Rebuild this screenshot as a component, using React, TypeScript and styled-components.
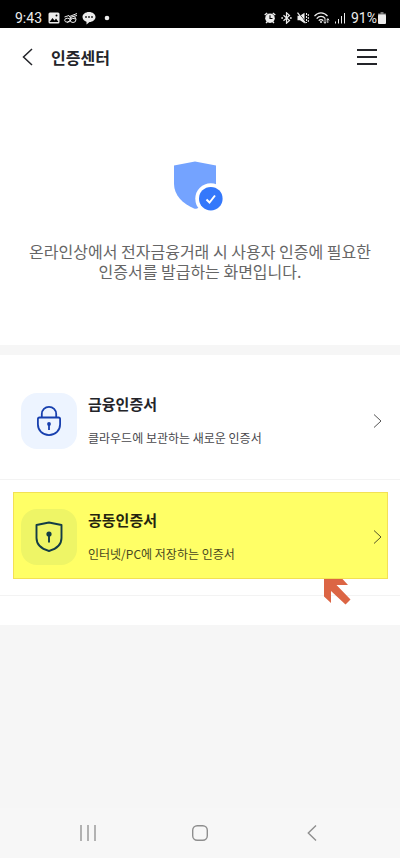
import React from "react";
import styled, { createGlobalStyle } from "styled-components";

const GlobalStyle = createGlobalStyle`
  *, *::before, *::after { box-sizing: border-box; }
  body {
    margin: 0;
    background: #f6f6f6;
    color: #232429;
    font-family: "Noto Sans CJK KR", "Noto Sans", sans-serif;
  }
  button { border: 0; padding: 0; background: none; color: inherit; font: inherit; cursor: pointer; }
  h1, h2, p, ul { margin: 0; padding: 0; }
  svg { display: block; flex: none; }
`;

const Screen = styled.div`
  min-height: 100vh;
  display: flex;
  flex-direction: column;
`;

const StatusBar = styled.div`
  height: 28px;
  padding: 8px 14px 0 15px;
  display: flex;
  align-items: center;
  justify-content: space-between;
  background: #000;
  color: #ececec;
  font-family: Roboto, sans-serif;
  font-size: 14px;
  line-height: 20px;
`;

const StatusGroup = styled.div<{ $gap: number }>`
  display: flex;
  align-items: center;
  gap: ${(p) => p.$gap}px;
`;

const Battery = styled.span`
  display: flex;
  align-items: center;
  gap: 1px;
`;

const Header = styled.header`
  height: 58px;
  padding: 0 22px;
  display: flex;
  align-items: center;
  background: #fff;
`;

const HeaderTitle = styled.h1`
  flex: 1;
  padding-left: 17px;
  font-size: 16px;
  line-height: 24px;
  font-weight: 700;
`;

const Hero = styled.section`
  min-height: 259px;
  padding: 75px 20px 0;
  display: flex;
  flex-direction: column;
  align-items: center;
  gap: 30px;
  background: #fff;
`;

const HeroText = styled.p`
  color: #666;
  font-size: 16px;
  line-height: 20px;
  text-align: center;
`;

const List = styled.ul`
  margin-top: 10px;
  padding-bottom: 29px;
  list-style: none;
  background: #fff;
`;

const ListItem = styled.li<{ $top: number; $bottom: number }>`
  padding: ${(p) => p.$top}px 12px ${(p) => p.$bottom}px 13px;
  border-bottom: 1px solid #f3f3f3;
`;

const CardWrap = styled.div`
  position: relative;
`;

const Card = styled.button<{ $highlighted?: boolean }>`
  width: 100%;
  min-height: 87px;
  padding: 3px 5px 0 7px;
  display: flex;
  align-items: center;
  gap: 11px;
  text-align: left;
  border: 1px solid ${(p) => (p.$highlighted ? "#f3e154" : "transparent")};
  background: ${(p) => (p.$highlighted ? "#ffff66" : "transparent")};
  color: ${(p) => (p.$highlighted ? "#24240f" : "#232429")};
`;

const IconTile = styled.span<{ $highlighted?: boolean }>`
  width: 56px;
  height: 56px;
  flex: none;
  display: flex;
  align-items: center;
  justify-content: center;
  border-radius: 16px;
  background: ${(p) => (p.$highlighted ? "#eef566" : "#edf4ff")};
`;

const CardText = styled.span`
  flex: 1;
  display: flex;
  flex-direction: column;
  gap: 12px;
`;

const CardTitle = styled.span`
  font-size: 15px;
  line-height: 22px;
  font-weight: 700;
`;

const CardNote = styled.span<{ $highlighted?: boolean }>`
  font-size: 12px;
  line-height: 22px;
  color: ${(p) => (p.$highlighted ? "#48481f" : "#48484c")};
`;

const Pointer = styled.svg`
  position: absolute;
  top: 100%;
  right: 37px;
  pointer-events: none;
`;

const NavBar = styled.nav`
  height: 50px;
  margin-top: auto;
  padding: 0 32px;
  display: grid;
  grid-template-columns: repeat(3, 1fr);
  background: #f7f7f7;
`;

const NavButton = styled.button`
  display: flex;
  align-items: center;
  justify-content: center;
`;

const ShieldCheck = () => (
  <svg width="52" height="50" viewBox="0 0 52 50" aria-hidden="true">
    <path d="M0 4.500 21 .5l21 4V24c0 12-10 20-19 23.500-1 .3-2 .3-3 0C9 43 0 34 0 23Z" fill="#74a3ff" />
    <circle cx="36.800" cy="37.700" r="15.500" fill="#fff" />
    <circle cx="36.800" cy="37.700" r="11.800" fill="#3478fb" />
    <path d="m32.500 38.500 3 3 5.500-7" fill="none" stroke="#fff" strokeWidth="2" />
  </svg>
);

const LockIcon = () => (
  <svg width="26" height="32" viewBox="0 0 26 32" fill="none" stroke="#173fae" strokeWidth="1.800" aria-hidden="true">
    <path d="M5.800 12.500V9a7.200 7.200 0 0 1 14.400 0v3.500" />
    <path d="M3.500 12.500h19c1 0 1.600.6 1.600 1.600v5.200c0 6-4.500 10.800-11.100 10.800S1.900 25.300 1.900 19.300v-5.200c0-1 .6-1.600 1.600-1.600Z" />
    <circle cx="13" cy="19" r="1.900" fill="#173fae" stroke="none" />
    <path d="M13 19v6" />
  </svg>
);

const ShieldKeyIcon = () => (
  <svg width="28" height="32" viewBox="0 0 28 32" fill="none" stroke="#123c46" strokeWidth="1.900" aria-hidden="true">
    <path d="M14 1.500 26.500 4V17c0 6.500-5.500 11-12.500 13C7 28 1.500 23.500 1.500 17V4Z" strokeLinejoin="round" />
    <circle cx="14" cy="13" r="2.600" fill="#123c46" stroke="none" />
    <path d="M14 13V21.500" />
  </svg>
);

const Chevron = ({ color }: { color: string }) => (
  <svg width="10" height="16" viewBox="0 0 10 16" fill="none" stroke={color} aria-hidden="true">
    <path d="m2 1.500 7 6.500-7 6.500" />
  </svg>
);

const PictureIcon = () => (
  <svg width="12" height="12" viewBox="0 0 12 12">
    <rect x=".5" y=".5" width="11" height="11" rx="1.500" fill="#ececec" />
    <path d="m1.500 10 3-4 2 2.400L8 6.500l2.500 3.500Z" fill="#000" />
    <circle cx="8.500" cy="3.500" r="1" fill="#000" />
  </svg>
);

const DoodleIcon = () => (
  <svg width="14" height="12" viewBox="0 0 14 12" fill="none" stroke="#ececec">
    <ellipse cx="3.500" cy="8.200" rx="2.800" ry="2" />
    <ellipse cx="9" cy="7.500" rx="3" ry="3" />
    <path d="M.5 5 5 3.500l2.500 4-4.500 3M5.500 4.500l7.500-3M7 6l5 1M9 4.500l4-1" />
  </svg>
);

const ChatIcon = () => (
  <svg width="14" height="14" viewBox="0 0 14 14">
    <path d="M7 1c3.600 0 6.500 2.200 6.500 5S10.600 11 7.500 11L4.500 13.500V10.700C2.200 10 .5 8.200.5 6 .5 3.200 3.400 1 7 1Z" fill="#ececec" />
    <path d="M3.200 5.300h1.600v1.500H3.200zM6.200 5.300h1.600v1.500H6.200zM9.200 5.300h1.600v1.500H9.200z" fill="#000" />
  </svg>
);

const AlarmIcon = () => (
  <svg width="12" height="12" viewBox="0 0 12 12">
    <path d="m.7 3 2.500-2M11.300 3 8.800 1M2 11l1.500-1.500M10 11 8.500 9.500" stroke="#ececec" strokeWidth="1.400" />
    <circle cx="6" cy="6.200" r="4.800" fill="#ececec" />
    <path d="M6 3.300v3.200h2.500" fill="none" stroke="#000" strokeWidth="1.100" />
  </svg>
);

const BluetoothIcon = () => (
  <svg width="11" height="12" viewBox="0 0 11 12" fill="none" stroke="#ececec" strokeWidth="1.200">
    <path d="m2.500 3.200 6 5.300-3 2.700V.8l3 2.700-6 5.300" />
    <path d="M.3 6h1.700M9 6h1.700" strokeWidth="1.500" />
  </svg>
);

const MuteIcon = () => (
  <svg width="12" height="12" viewBox="0 0 12 12" fill="none" stroke="#ececec">
    <path d="M.5 3.800H3L7.500.8v10.400L3 8.200H.5Z" fill="#ececec" stroke="none" />
    <path d="m1.300.5 7.700 10" stroke="#000" />
    <path d="m.5.700 8 10.500" strokeWidth="1.200" />
    <path d="M9.500 1v10M11.300 2v9" strokeDasharray="2 1" />
  </svg>
);

const WifiIcon = () => (
  <svg width="16" height="12" viewBox="0 0 16 12" fill="none" stroke="#ececec" strokeWidth="1.300">
    <path d="M.5 4.200C4-.2 10-.2 13.500 4.200M2.700 6.600c2.400-3 6.200-3 8.600 0M4.800 8.700c1.300-1.500 3.100-1.500 4.400 0" />
    <circle cx="7" cy="10" r="1" fill="#ececec" stroke="none" />
    <path d="M11 6.800v4.500M9.600 9.700 11 11.300l1.300-1.600M13.800 11V6.700M12.500 8.300l1.300-1.600 1.400 1.600" strokeWidth=".9" />
  </svg>
);

const SignalIcon = () => (
  <svg width="11" height="12" viewBox="0 0 11 12" stroke="#ececec">
    <path d="M.5 9.500v2M3.500 7v4.500M6.500 4v7.500M9.500 1v10.500" />
  </svg>
);

const BatteryIcon = () => (
  <svg width="8" height="12" viewBox="0 0 8 12" fill="#ececec">
    <path d="M2.500 0h3v1.500H8V3H0V1.500h2.500Z" fill="#777" />
    <rect y="2.500" width="8" height="9.500" rx="1" />
  </svg>
);

export default function App() {
  return (
    <Screen>
      <GlobalStyle />
      <StatusBar>
        <StatusGroup $gap={6}>
          <span>9:43</span>
          <StatusGroup $gap={4}>
            <PictureIcon />
            <DoodleIcon />
            <ChatIcon />
          </StatusGroup>
          <svg width="10" height="6" viewBox="0 0 10 6">
            <circle cx="5" cy="3" r="2.300" fill="#ececec" />
          </svg>
        </StatusGroup>
        <StatusGroup $gap={5}>
          <AlarmIcon />
          <BluetoothIcon />
          <MuteIcon />
          <WifiIcon />
          <SignalIcon />
          <Battery>
            <span>91%</span>
            <BatteryIcon />
          </Battery>
        </StatusGroup>
      </StatusBar>

      <Header>
        <button aria-label="뒤로">
          <svg width="12" height="18" viewBox="0 0 12 18" fill="none" stroke="#232429" strokeWidth="1.500">
            <path d="M10 1 1.500 9l8.500 8" />
          </svg>
        </button>
        <HeaderTitle>인증센터</HeaderTitle>
        <button aria-label="메뉴">
          <svg width="22" height="18" viewBox="0 0 22 18" stroke="#232429" strokeWidth="2">
            <path d="M1 2h20M1 9h20M1 16h20" />
          </svg>
        </button>
      </Header>

      <Hero>
        <ShieldCheck />
        <HeroText>
          온라인상에서 전자금융거래 시 사용자 인증에 필요한
          <br />
          인증서를 발급하는 화면입니다.
        </HeroText>
      </Hero>

      <List>
        <ListItem $top={21} $bottom={16}>
          <Card>
            <IconTile>
              <LockIcon />
            </IconTile>
            <CardText>
              <CardTitle>금융인증서</CardTitle>
              <CardNote>클라우드에 보관하는 새로운 인증서</CardNote>
            </CardText>
            <Chevron color="#555" />
          </Card>
        </ListItem>
        <ListItem $top={12} $bottom={16}>
          <CardWrap>
            <Card $highlighted>
              <IconTile $highlighted>
                <ShieldKeyIcon />
              </IconTile>
              <CardText>
                <CardTitle>공동인증서</CardTitle>
                <CardNote $highlighted>인터넷/PC에 저장하는 인증서</CardNote>
              </CardText>
              <Chevron color="#55552a" />
            </Card>
            <Pointer width="27" height="27" viewBox="0 0 27 27" aria-hidden="true">
              <path d="M0 0h18.500l5.500 6H12.500L26.500 20.500 21.500 25.500 7 12v12L0 17.500Z" fill="#dc6544" />
            </Pointer>
          </CardWrap>
        </ListItem>
      </List>

      <NavBar>
        <NavButton aria-label="최근 앱">
          <svg width="16" height="16" viewBox="0 0 16 16" stroke="#8e8e8e" strokeWidth="1.300">
            <path d="M1 0v16M8 0v16M15 0v16" />
          </svg>
        </NavButton>
        <NavButton aria-label="홈">
          <svg width="16" height="16" viewBox="0 0 16 16" fill="none" stroke="#8e8e8e" strokeWidth="1.400">
            <rect x=".7" y=".7" width="14.600" height="14.600" rx="4.500" />
          </svg>
        </NavButton>
        <NavButton aria-label="이전">
          <svg width="10" height="16" viewBox="0 0 10 16" fill="none" stroke="#8e8e8e" strokeWidth="1.400">
            <path d="M9 .5 1.300 8 9 15.500" />
          </svg>
        </NavButton>
      </NavBar>
    </Screen>
  );
}
